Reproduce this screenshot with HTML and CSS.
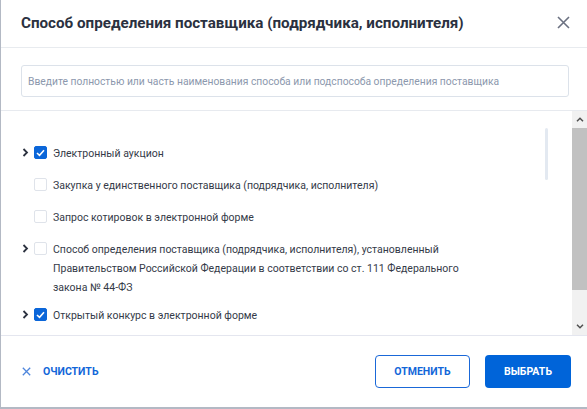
FILE: index.html
```html
<!DOCTYPE html>
<html lang="ru">
<head>
<meta charset="utf-8">
<link rel="stylesheet" href="styles.css">
</head>
<body>
<div class="modal">
  <div class="header">
    <div class="title">Способ определения поставщика (подрядчика, исполнителя)</div>
    <svg class="close" width="13" height="13" viewBox="0 0 13 13"><path d="M1 1L12 12M12 1L1 12" stroke="#6b7181" stroke-width="1.6" fill="none"/></svg>
  </div>
  <div class="search-wrap">
    <div class="search">Введите полностью или часть наименования способа или подспособа определения поставщика</div>
  </div>
  <div class="list">
    <div class="items">
      <div class="row">
        <span class="chev"><svg width="7" height="9" viewBox="0 0 7 9"><path d="M1.5 1L5 4.5L1.5 8" stroke="#2c3240" stroke-width="1.8" fill="none"/></svg></span>
        <span class="cb-wrap"><span class="cb checked"><svg width="9" height="8" viewBox="0 0 9 8"><path d="M1 4L3.5 6.3L8 1.3" stroke="#fff" stroke-width="1.6" fill="none"/></svg></span></span>
        <span class="label">Электронный аукцион</span>
      </div>
      <div class="row">
        <span class="chev"></span>
        <span class="cb-wrap"><span class="cb"></span></span>
        <span class="label">Закупка у единственного поставщика (подрядчика, исполнителя)</span>
      </div>
      <div class="row">
        <span class="chev"></span>
        <span class="cb-wrap"><span class="cb"></span></span>
        <span class="label">Запрос котировок в электронной форме</span>
      </div>
      <div class="row">
        <span class="chev"><svg width="7" height="9" viewBox="0 0 7 9"><path d="M1.5 1L5 4.5L1.5 8" stroke="#2c3240" stroke-width="1.8" fill="none"/></svg></span>
        <span class="cb-wrap"><span class="cb"></span></span>
        <span class="label">Способ определения поставщика (подрядчика, исполнителя), установленный<br>Правительством Российской Федерации в соответствии со ст. 111 Федерального<br>закона № 44-ФЗ</span>
      </div>
      <div class="row">
        <span class="chev"><svg width="7" height="9" viewBox="0 0 7 9"><path d="M1.5 1L5 4.5L1.5 8" stroke="#2c3240" stroke-width="1.8" fill="none"/></svg></span>
        <span class="cb-wrap"><span class="cb checked"><svg width="9" height="8" viewBox="0 0 9 8"><path d="M1 4L3.5 6.3L8 1.3" stroke="#fff" stroke-width="1.6" fill="none"/></svg></span></span>
        <span class="label">Открытый конкурс в электронной форме</span>
      </div>
      <div class="inner-thumb"></div>
    </div>
    <div class="scrollbar">
      <div class="sb-btn"><svg width="8" height="5" viewBox="0 0 8 5"><path d="M1 4.2L4 1.2L7 4.2" stroke="#505050" stroke-width="1.5" fill="none"/></svg></div>
      <div class="sb-track"><div class="sb-thumb"></div></div>
      <div class="sb-btn"><svg width="8" height="5" viewBox="0 0 8 5"><path d="M1 0.8L4 3.8L7 0.8" stroke="#505050" stroke-width="1.5" fill="none"/></svg></div>
    </div>
  </div>
  <div class="footer">
    <div class="clear">
      <svg width="9" height="9" viewBox="0 0 9 9"><path d="M0.8 0.8L8.2 8.2M8.2 0.8L0.8 8.2" stroke="#4f86dc" stroke-width="1.3" fill="none"/></svg>
      <span>ОЧИСТИТЬ</span>
    </div>
    <div class="actions">
      <div class="btn outline">ОТМЕНИТЬ</div>
      <div class="btn primary">ВЫБРАТЬ</div>
    </div>
  </div>
</div>
</body>
</html>
```

FILE: styles.css
```css
* { box-sizing: border-box; }
html, body { margin: 0; padding: 0; }
body {
  width: 587px;
  height: 409px;
  background: #b3b9c4;
  font-family: Roboto, "Liberation Sans", Arial, sans-serif;
  overflow: hidden;
}
.modal {
  margin-left: 1px;
  width: 586px;
  height: 407px;
  background: #fff;
  display: flex;
  flex-direction: column;
}
.header {
  height: 48px;
  border-bottom: 1px solid #e8ebef;
  display: flex;
  align-items: center;
  justify-content: space-between;
  padding: 0 17px 2px 20px;
  flex: none;
}
.title {
  font-size: 15.2px;
  font-weight: 700;
  color: #2b3140;
  letter-spacing: 0;
}
.close { display: block; }
.search-wrap {
  padding: 17px 18px 13px 20px;
  flex: none;
}
.search {
  height: 32px;
  border: 1px solid #dce2ea;
  border-radius: 3px;
  padding: 0 6px;
  display: flex;
  align-items: center;
  font-size: 10.3px;
  color: #8c98ad;
  white-space: nowrap;
  overflow: hidden;
}
.list {
  border-top: 1px solid #e7eaef;
  border-bottom: 1px solid #e4e6ef;
  height: 226px;
  display: flex;
  flex: none;
}
.items {
  flex: 1;
  position: relative;
  padding: 26px 0 0 21px;
  overflow: hidden;
}
.row {
  display: flex;
  align-items: flex-start;
  min-height: 32px;
}
.chev {
  width: 12px;
  height: 32px;
  display: flex;
  align-items: center;
  flex: none;
}
.chev svg { display: block; margin-top: -1px; }
.cb-wrap {
  width: 19px;
  height: 32px;
  display: flex;
  align-items: center;
  flex: none;
}
.cb {
  width: 13px;
  height: 13px;
  border: 1px solid #dfe3ea;
  border-radius: 2px;
  background: #fff;
  display: flex;
  align-items: center;
  justify-content: center;
  margin-top: -1px;
}
.cb.checked {
  background: #0b66d9;
  border-color: #0b66d9;
}
.cb svg { display: block; }
.label {
  font-size: 10.5px;
  line-height: 19px;
  color: #343a48;
  padding: 7px 0 2px;
}
.inner-thumb {
  position: absolute;
  left: 544px;
  top: 17px;
  width: 3px;
  height: 52px;
  border-radius: 2px;
  background: #e3e9f1;
}
.scrollbar {
  width: 15px;
  flex: none;
  background: #f1f1f1;
  display: flex;
  flex-direction: column;
}
.sb-btn {
  height: 17px;
  display: flex;
  align-items: center;
  justify-content: center;
  flex: none;
}
.sb-track {
  flex: 1;
  padding-bottom: 28px;
}
.sb-thumb {
  height: 100%;
  background: #c1c1c1;
}
.footer {
  flex: 1;
  display: flex;
  align-items: center;
  justify-content: space-between;
  padding: 0 16px 0 21px;
}
.clear {
  display: flex;
  align-items: center;
  gap: 12px;
  font-size: 10.5px;
  font-weight: 700;
  color: #1266d9;
}
.clear svg { display: block; }
.actions {
  display: flex;
  gap: 15px;
}
.btn {
  height: 33px;
  border-radius: 4px;
  display: flex;
  align-items: center;
  justify-content: center;
  font-size: 10.5px;
  font-weight: 700;
}
.btn.outline {
  width: 95px;
  border: 1.5px solid #1a68d8;
  color: #1266d9;
}
.btn.primary {
  width: 86px;
  background: #0064d9;
  color: #fff;
}
```
